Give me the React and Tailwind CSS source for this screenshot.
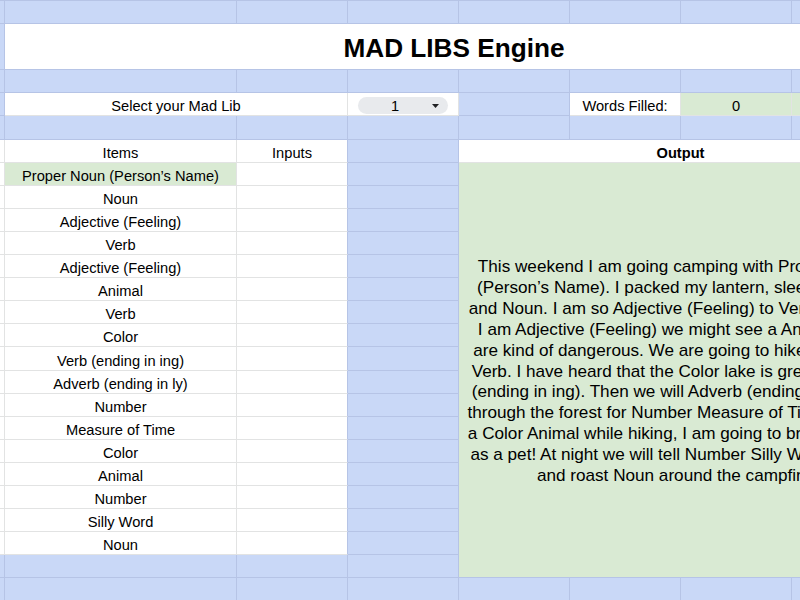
import React from 'react';

const items = [
  'Proper Noun (Person’s Name)',
  'Noun',
  'Adjective (Feeling)',
  'Verb',
  'Adjective (Feeling)',
  'Animal',
  'Verb',
  'Color',
  'Verb (ending in ing)',
  'Adverb (ending in ly)',
  'Number',
  'Measure of Time',
  'Color',
  'Animal',
  'Number',
  'Silly Word',
  'Noun',
];

const story = [
  'This weekend I am going camping with Proper Noun',
  '(Person’s Name). I packed my lantern, sleeping bag,',
  'and Noun. I am so Adjective (Feeling) to Verb in a tent.',
  'I am Adjective (Feeling) we might see a Animal, they',
  'are kind of dangerous. We are going to hike, fish, and',
  'Verb. I have heard that the Color lake is great for Verb',
  '(ending in ing). Then we will Adverb (ending in ly) hike',
  'through the forest for Number Measure of Time. If I see',
  'a Color Animal while hiking, I am going to bring it home',
  'as a pet! At night we will tell Number Silly Word stories',
  'and roast Noun around the campfire.',
];

// plain blue filler cell
const Blue = ({ className = '' }) => (
  <div className={`bg-[#c9d8f7] border-r border-b border-[#b6c4e6] ${className}`} />
);

// white cell, text centred at the bottom like Sheets
const Cell = ({ children, className = '' }) => (
  <div
    className={`flex items-end justify-center leading-[18px] whitespace-nowrap border-r border-b border-[#e2e3e3] ${className}`}
  >
    {children}
  </div>
);

const BlueRow = () => (
  <>
    <Blue />
    <Blue />
    <Blue />
    <Blue />
    <Blue />
    <Blue />
    <Blue />
    <Blue />
  </>
);

export default function App() {
  return (
    <div className="w-[800px] h-[600px] overflow-hidden bg-white text-black text-[14.67px] font-['Liberation_Sans',Arial,sans-serif]">
      <div className="grid w-[903px] border-t border-[#b6c4e6] grid-cols-[5px_232px_111px_111px_111px_111px_111px_111px] grid-rows-[23.1px_46.2px_repeat(23,23.1px)]">
        {/* row 1 */}
        <BlueRow />

        {/* title */}
        <Blue />
        <div className="col-span-7 bg-white border-b border-[#b6c4e6] flex items-center justify-center pt-[4px] font-bold text-[26.2px]">
          MAD LIBS Engine
        </div>

        <BlueRow />

        {/* selector row */}
        <Blue />
        <Cell className="col-span-2 bg-white">Select your Mad Lib</Cell>
        <div className="bg-white border-r border-b border-[#e2e3e3] flex items-center pt-[3px]">
          <div className="ml-[10px] w-[90px] h-[17px] rounded-full bg-[#e8eaed] flex items-center">
            <span className="flex-1 text-center leading-none pt-[1px]">1</span>
            <svg width="7" height="4" viewBox="0 0 7 4" className="mr-[9px]">
              <path d="M0 0h7L3.5 4z" fill="#202124" />
            </svg>
          </div>
        </div>
        <Blue />
        <Cell className="bg-white">Words Filled:</Cell>
        <Cell className="bg-[#d9ead3] border-[#c9d5d8]">0</Cell>
        <Cell className="bg-[#d9ead3] border-[#c9d5d8]" />

        <BlueRow />

        {/* headers */}
        <Cell className="bg-white" />
        <Cell className="bg-white">Items</Cell>
        <Cell className="bg-white border-r-[#b6c4e6]">Inputs</Cell>
        <Blue />
        <Cell className="col-span-4 bg-white font-bold">Output</Cell>

        {/* item rows */}
        {items.map((it, i) => (
          <React.Fragment key={i}>
            <Cell className="bg-white" />
            <Cell className={i === 0 ? 'bg-[#d9ead3]' : 'bg-white'}>{it}</Cell>
            <Cell className="bg-white border-r-[#b6c4e6]" />
            <Blue />
            {i === 0 && (
              <div className="row-span-18 col-span-4 bg-[#d9ead3] border-b border-[#b6c4e6] flex flex-col justify-center pt-[2px] pr-[9px] text-center text-[17.15px] leading-[20.84px]">
                {story.map((line, j) => (
                  <div key={j} className="whitespace-nowrap">
                    {line}
                  </div>
                ))}
              </div>
            )}
          </React.Fragment>
        ))}

        {/* below the list */}
        <Blue />
        <Blue />
        <Blue />
        <Blue />

        <BlueRow />
      </div>
    </div>
  );
}
